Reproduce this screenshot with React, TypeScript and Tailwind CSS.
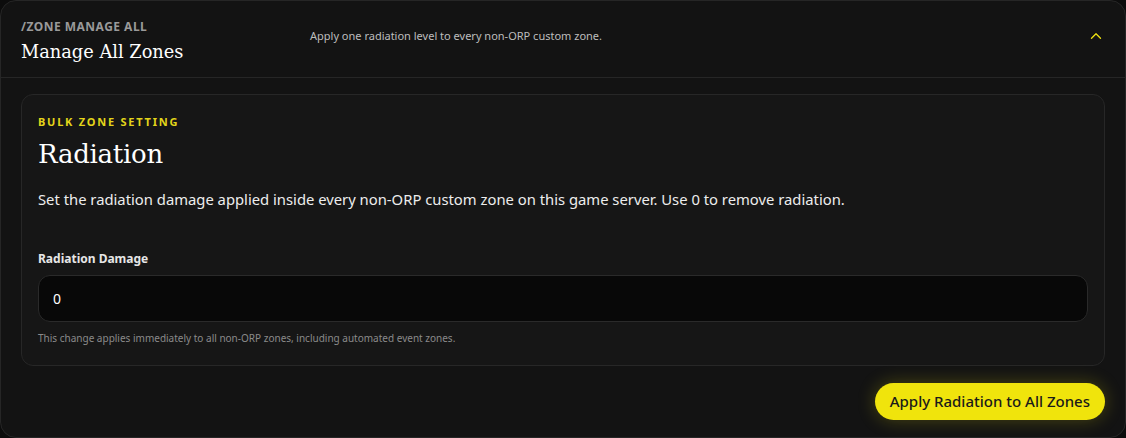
import { ChevronUp } from 'lucide-react';

const sans = "font-['Segoe_UI','Noto_Sans',sans-serif]";
const serif = "font-['DejaVu_Serif',serif]";

export default function App() {
  return (
    <div className={`min-h-screen w-full bg-[#0c0c0c] ${sans}`}>
      <section className="h-[438px] overflow-hidden rounded-2xl border border-[#262626] bg-[#131313]">
        {/* Header */}
        <header className="flex h-[77px] items-center border-b border-[#262626] pl-5 pr-[20px]">
          <div className="mt-[3px] w-[289px]">
            <div className="text-[12px] font-bold uppercase leading-none tracking-[0.04em] text-[#9a9a9a]">
              /zone manage all
            </div>
            <h1 className={`${serif} mt-[10px] text-[17.8px] leading-none text-white`}>
              Manage All Zones
            </h1>
          </div>
          <p className="mb-[5px] text-[11px] text-[#bdbdbd]">
            Apply one radiation level to every non-ORP custom zone.
          </p>
          <ChevronUp className="mb-[6px] ml-auto h-[18px] w-[18px] text-[#e8dc10]" strokeWidth={1.8} />
        </header>

        <div className="px-5 pt-4">
          {/* Bulk setting card */}
          <div className="rounded-xl border border-[#272727] bg-[#161616] px-4 pb-[19px] pt-[21px]">
            <div className="text-[11px] font-bold uppercase leading-none tracking-[0.16em] text-[#e3d51a]">
              Bulk zone setting
            </div>
            <h2 className={`${serif} mt-[14px] text-[26px] leading-none tracking-[-0.01em] text-white`}>Radiation</h2>
            <p className="mt-[22px] text-[14.8px] leading-5 text-[#ededed]">
              Set the radiation damage applied inside every non-ORP custom zone on this game server. Use 0 to remove radiation.
            </p>

            <label className="mt-[42px] block text-[12px] font-bold leading-4 text-[#e6e6e6]">
              Radiation Damage
            </label>
            <div className="mt-[8px] flex h-[47px] items-center rounded-xl border border-[#2a2a2a] bg-[#080808] px-[14px] text-[14px] text-white">
              0
            </div>
            <p className="mt-[8px] text-[10px] leading-4 text-[#8a8a8a]">
              This change applies immediately to all non-ORP zones, including automated event zones.
            </p>
          </div>

          <div className="mt-[17px] flex justify-end">
            <button className="h-[37px] rounded-full bg-[#f0e40c] px-[15px] text-[15px] font-medium text-[#1a1a1a] shadow-[0_0_18px_rgba(240,228,12,0.25)]">
              Apply Radiation to All Zones
            </button>
          </div>
        </div>
      </section>
    </div>
  );
}
